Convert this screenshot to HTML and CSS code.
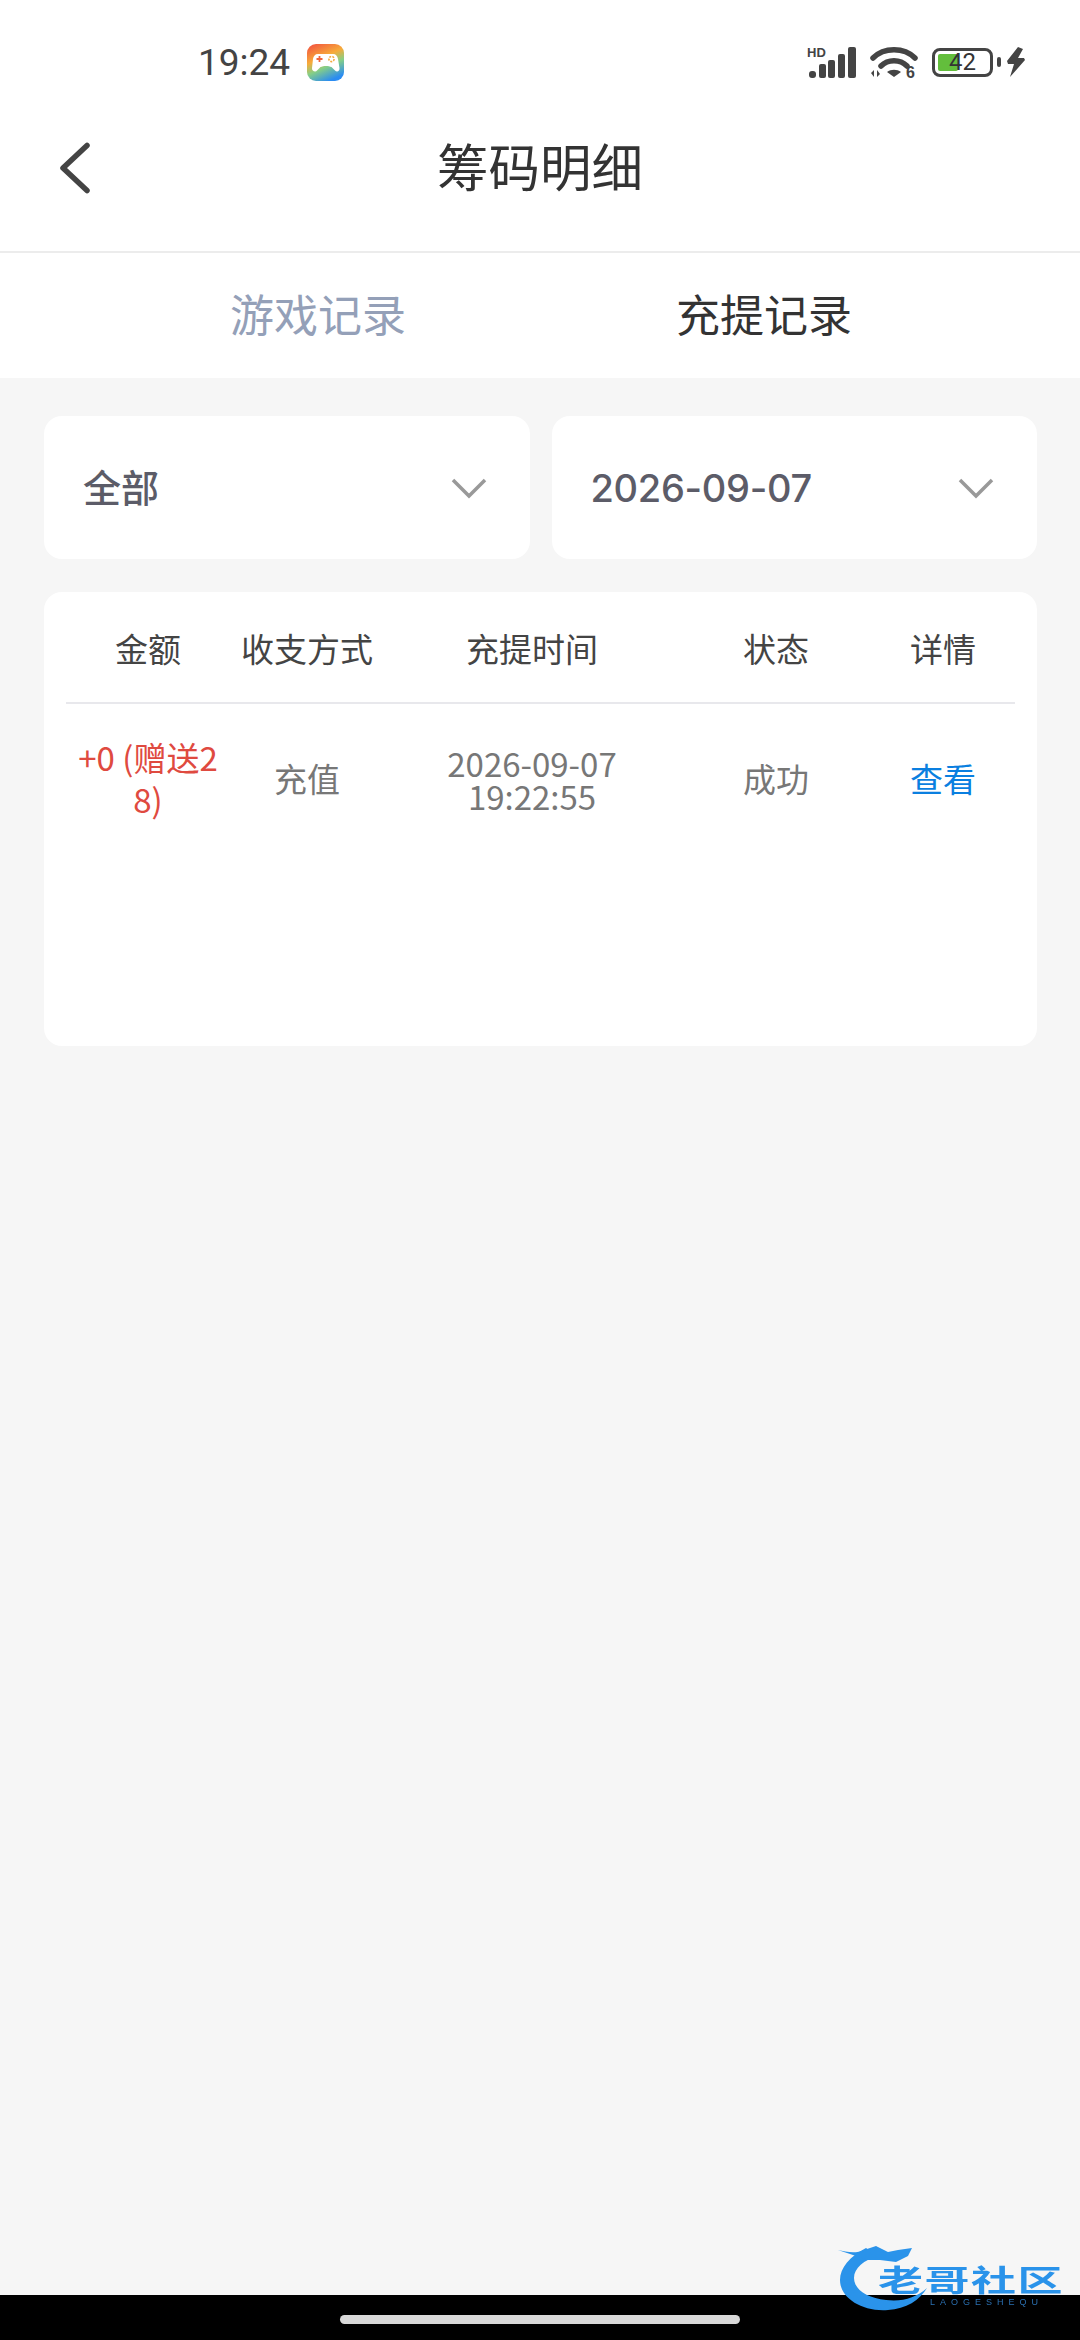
FILE: index.html
```html
<!DOCTYPE html>
<html lang="zh-CN">
<head>
    <meta charset="UTF-8">
    <meta name="viewport" content="width=device-width, initial-scale=1.0">
    <title>筹码明细</title>
    <link rel="stylesheet" href="styles.css">
</head>
<body>
    <!-- Status bar -->
    <div class="status-bar">
        <span class="clock">19:24</span>
        <svg class="game-icon" width="37" height="37" viewBox="0 0 37 37">
            <defs>
                <linearGradient id="game-bg" x1="0.15" y1="0" x2="0.6" y2="1">
                    <stop offset="0" stop-color="#f2573f"/>
                    <stop offset="0.4" stop-color="#f7ab3a"/>
                    <stop offset="0.65" stop-color="#86cf86"/>
                    <stop offset="1" stop-color="#2a8cf2"/>
                </linearGradient>
            </defs>
            <rect width="37" height="37" rx="9" fill="url(#game-bg)"/>
            <path d="M11 10h15c3 0 4.500 2 5 5l1.500 9c.4 3-2.500 4.500-4.500 2.500l-3.500-3.500c-3-1.500-8-1.500-11 0l-3.500 3.500C8.500 28.500 4.600 27 5 24l1-9c.5-3 2-5 5-5z" fill="#fff"/>
            <path d="M9.500 15h6M12.500 12v6" stroke="#f0643c" stroke-width="1.800"/>
            <circle cx="24.500" cy="15" r="2.600" fill="none" stroke="#f2a93c" stroke-width="1.600" stroke-dasharray="2 1.200"/>
        </svg>
        <div class="status-icons">
            <svg class="signal-icon" width="50" height="32" viewBox="0 0 50 32">
                <text x="0" y="11" class="hd-label">HD</text>
                <rect x="2" y="25" width="7" height="7" rx="3" fill="#444"/>
                <rect x="12" y="18" width="7" height="14" rx="2" fill="#444"/>
                <rect x="21" y="14" width="7" height="18" rx="2" fill="#444"/>
                <rect x="31" y="8" width="7" height="24" rx="2" fill="#444"/>
                <rect x="41" y="1" width="8" height="31" rx="2" fill="#444"/>
            </svg>
            <svg class="wifi-icon" width="48" height="36" viewBox="0 0 48 36">
                <path d="M3 14C14 3 34 3 45 14" fill="none" stroke="#444" stroke-width="5.500" stroke-linecap="round"/>
                <path d="M11 22c7-7 19-7 26 0" fill="none" stroke="#444" stroke-width="5.500" stroke-linecap="round"/>
                <path d="M17 28c4-3 10-3 14 0l-7 5z" fill="#444"/>
                <path d="M1 29l3-3v7zM7 26v7l3-3" fill="#444"/>
                <text x="36" y="34" class="wifi-six">6</text>
            </svg>
            <div class="battery">
                <div class="battery-body">
                    <div class="battery-fill"></div>
                    <span class="battery-num">42</span>
                </div>
                <div class="battery-nub"></div>
            </div>
            <svg class="bolt-icon" width="18" height="30" viewBox="0 0 18 30">
                <path d="M11 0L0 14l1 3h6L3 30 18 13l-1-2h-6l5-9z" fill="#444"/>
            </svg>
        </div>
    </div>

    <!-- Title bar -->
    <div class="title-bar">
        <svg class="back-icon" width="34" height="56" viewBox="0 0 34 56">
            <path d="M29 5.500L5 28l24 22.500" fill="none" stroke="#444" stroke-width="5.500" stroke-linecap="round" stroke-linejoin="round"/>
        </svg>
        <h1 class="title">筹码明细</h1>
    </div>

    <!-- Tabs -->
    <div class="tabs">
        <div class="tab tab-muted">游戏记录</div>
        <div class="tab">充提记录</div>
    </div>

    <div class="content">
        <!-- Filters -->
        <div class="filters">
            <div class="select">
                <span class="select-text">全部</span>
                <svg width="36" height="22" viewBox="0 0 36 22"><path d="M2 3l16 16L34 3" fill="none" stroke="#999" stroke-width="3.500"/></svg>
            </div>
            <div class="select">
                <span class="select-text select-date">2026-09-07</span>
                <svg width="36" height="22" viewBox="0 0 36 22"><path d="M2 3l16 16L34 3" fill="none" stroke="#999" stroke-width="3.500"/></svg>
            </div>
        </div>

        <!-- Records -->
        <div class="card">
            <div class="row row-head">
                <div>金额</div>
                <div>收支方式</div>
                <div>充提时间</div>
                <div>状态</div>
                <div>详情</div>
            </div>
            <div class="row row-body">
                <div class="amount">+0 (赠送28)</div>
                <div>充值</div>
                <div class="time">2026-09-07<br>19:22:55</div>
                <div>成功</div>
                <div class="link">查看</div>
            </div>
        </div>
    </div>

    <!-- Nav bar -->
    <div class="nav-bar">
        <div class="home-pill"></div>
    </div>

    <!-- Watermark over the corner -->
    <div class="watermark">
        <svg class="watermark-dragon" width="100" height="76" viewBox="0 0 100 76">
            <path d="M30 6C14 14 4 26 4 38c0 18 22 32 48 30 18-1 32-10 39-22-11 10-25 14-41 12-18-2-32-10-32-22 0-10 10-18 24-22z" fill="#2a93ea"/>
            <path d="M2 8c8 2 18 4 26 0l12-4 12 6 10-2 14-2-4 8-12 6-16-2-12 0z" fill="#2a93ea"/>
        </svg>
        <span class="watermark-name">老哥社区</span>
        <span class="watermark-sub">LAOGESHEQU</span>
    </div>
</body>
</html>
```

FILE: styles.css
```css
* {
    box-sizing: border-box;
}
body {
    margin: 0;
    width: 1080px;
    height: 2340px;
    position: relative;
    overflow: hidden;
    display: flex;
    flex-direction: column;
    background-color: #f6f6f6;
    font-family: "Noto Sans CJK SC", "Noto Sans", sans-serif;
}
.status-bar {
    height: 84px;
    flex: none;
    display: flex;
    align-items: center;
    padding: 40px 55px 0 198px;
    background-color: #fff;
}
.clock {
    font-family: Roboto, sans-serif;
    font-size: 37px;
    color: #444;
    width: 109px;
}
.status-icons {
    margin-left: auto;
    display: flex;
    align-items: center;
}
.wifi-icon {
    margin-left: 13px;
}
.battery {
    margin-left: 14px;
    display: flex;
    align-items: center;
    gap: 4px;
}
.bolt-icon {
    margin-left: 6px;
}
.hd-label {
    font-family: "Liberation Sans", sans-serif;
    font-size: 13px;
    font-weight: 700;
    fill: #444;
}
.wifi-six {
    font-family: "Liberation Sans", sans-serif;
    font-size: 16px;
    font-weight: 700;
    fill: #444;
}
.battery-body {
    width: 61px;
    height: 29px;
    border: 3px solid #444;
    border-radius: 8px;
    padding: 3px;
    position: relative;
}
.battery-fill {
    width: 20px;
    height: 100%;
    background-color: #63be3c;
    border-radius: 2px;
}
.battery-num {
    position: absolute;
    left: 0;
    right: 0;
    top: -1px;
    text-align: center;
    font-family: Roboto, sans-serif;
    font-size: 24px;
    line-height: 25px;
    color: #333;
}
.battery-nub {
    width: 4px;
    height: 10px;
    background-color: #444;
    border-radius: 2px;
}
.title-bar {
    height: 169px;
    flex: none;
    display: flex;
    align-items: center;
    justify-content: center;
    position: relative;
    padding-bottom: 6px;
    background-color: #fff;
    border-bottom: 2px solid #ececec;
}
.back-icon {
    position: absolute;
    left: 58px;
    top: 56px;
}
.title {
    margin: 0;
    font-size: 51.500px;
    font-weight: 400;
    color: #333;
}
.tabs {
    height: 125px;
    flex: none;
    display: flex;
    padding: 0 0 5px 95px;
    background-color: #fff;
}
.tab {
    width: 446px;
    display: flex;
    align-items: center;
    justify-content: center;
    font-size: 44px;
    color: #333;
}
.tab-muted {
    color: #94a0b8;
}
.content {
    flex: 1;
    padding: 38px 43px 0 44px;
}
.filters {
    display: flex;
    gap: 22px;
}
.select {
    flex: 1;
    height: 143px;
    display: flex;
    align-items: center;
    justify-content: space-between;
    padding: 0 43px 0 39px;
    background-color: #fff;
    border-radius: 18px;
}
.select-text {
    padding-bottom: 4px;
    font-size: 38px;
    font-weight: 500;
    color: #5c5c68;
}
.select-date {
    padding-bottom: 0;
    font-family: Inter, sans-serif;
    letter-spacing: -0.3px;
}
.card {
    margin-top: 33px;
    height: 454px;
    padding: 0 22px;
    background-color: #fff;
    border-radius: 18px;
}
.row {
    display: grid;
    grid-template-columns: 164px 154px 296px 192px 142px;
    text-align: center;
    font-size: 33px;
}
.row-head {
    height: 112px;
    align-items: center;
    padding-top: 2px;
    color: #444;
    border-bottom: 2px solid #e8e8ec;
}
.row-body {
    height: 154px;
    align-items: center;
    padding-bottom: 6px;
    color: #777;
}
.amount {
    padding: 0 10px;
    color: #df4a40;
    line-height: 42px;
    word-break: break-all;
}
.time {
    margin-top: 4px;
    line-height: 33px;
}
.link {
    color: #0a7fe0;
}
.nav-bar {
    height: 45px;
    flex: none;
    display: flex;
    justify-content: center;
    padding-top: 20px;
    background-color: #000;
}
.home-pill {
    width: 400px;
    height: 9px;
    border-radius: 5px;
    background-color: #d8d8d8;
}
.watermark {
    position: absolute;
    left: 836px;
    top: 2242px;
    width: 230px;
    height: 76px;
    filter: blur(0.6px);
}
.watermark-dragon {
    position: absolute;
    left: 0;
    top: 0;
}
.watermark-name {
    position: absolute;
    left: 42px;
    top: 18px;
    font-size: 30px;
    line-height: 36px;
    font-weight: 700;
    letter-spacing: 1px;
    color: #2a93ea;
    white-space: nowrap;
    transform: scaleX(1.500);
    transform-origin: left center;
}
.watermark-sub {
    position: absolute;
    left: 94px;
    top: 55px;
    font-family: "Liberation Sans", sans-serif;
    font-size: 9px;
    letter-spacing: 5px;
    color: #2a6fb0;
    white-space: nowrap;
}
```
